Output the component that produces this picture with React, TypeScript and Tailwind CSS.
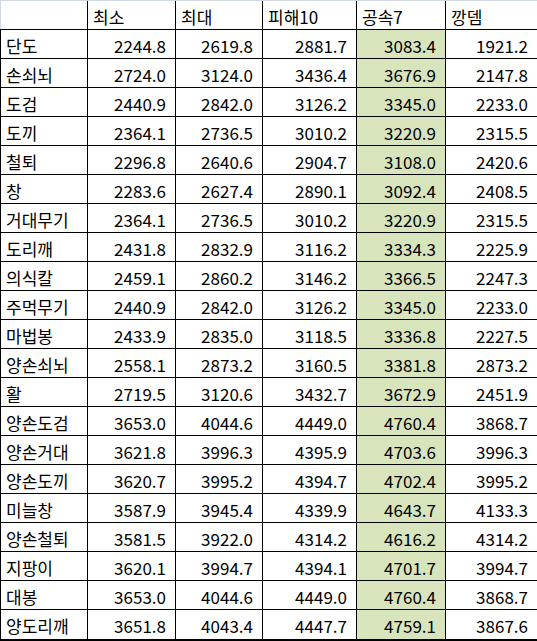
const headers = ["", "최소", "최대", "피해10", "공속7", "깡뎀"];

const rows: [string, string, string, string, string, string][] = [
  ["단도", "2244.8", "2619.8", "2881.7", "3083.4", "1921.2"],
  ["손쇠뇌", "2724.0", "3124.0", "3436.4", "3676.9", "2147.8"],
  ["도검", "2440.9", "2842.0", "3126.2", "3345.0", "2233.0"],
  ["도끼", "2364.1", "2736.5", "3010.2", "3220.9", "2315.5"],
  ["철퇴", "2296.8", "2640.6", "2904.7", "3108.0", "2420.6"],
  ["창", "2283.6", "2627.4", "2890.1", "3092.4", "2408.5"],
  ["거대무기", "2364.1", "2736.5", "3010.2", "3220.9", "2315.5"],
  ["도리깨", "2431.8", "2832.9", "3116.2", "3334.3", "2225.9"],
  ["의식칼", "2459.1", "2860.2", "3146.2", "3366.5", "2247.3"],
  ["주먹무기", "2440.9", "2842.0", "3126.2", "3345.0", "2233.0"],
  ["마법봉", "2433.9", "2835.0", "3118.5", "3336.8", "2227.5"],
  ["양손쇠뇌", "2558.1", "2873.2", "3160.5", "3381.8", "2873.2"],
  ["활", "2719.5", "3120.6", "3432.7", "3672.9", "2451.9"],
  ["양손도검", "3653.0", "4044.6", "4449.0", "4760.4", "3868.7"],
  ["양손거대", "3621.8", "3996.3", "4395.9", "4703.6", "3996.3"],
  ["양손도끼", "3620.7", "3995.2", "4394.7", "4702.4", "3995.2"],
  ["미늘창", "3587.9", "3945.4", "4339.9", "4643.7", "4133.3"],
  ["양손철퇴", "3581.5", "3922.0", "4314.2", "4616.2", "4314.2"],
  ["지팡이", "3620.1", "3994.7", "4394.1", "4701.7", "3994.7"],
  ["대봉", "3653.0", "4044.6", "4449.0", "4760.4", "3868.7"],
  ["양도리깨", "3651.8", "4043.4", "4447.7", "4759.1", "3867.6"],
];

const grid = "grid grid-cols-[88px_88px_87px_94px_89px_1fr]";

export default function App() {
  return (
    <div className="w-[537px] h-[641px] overflow-hidden bg-white text-black text-[17px] leading-none font-['Noto_Sans_CJK_KR','Noto_Sans',sans-serif]">
      {/* header */}
      <div className={`${grid} h-[30px] border-t border-[#d0d7e5] border-b border-b-black`}>
        {headers.map((h, i) => (
          <div
            key={i}
            className={`flex items-center pt-[2px] pl-[5px] border-r border-black ${
              i === 0 ? "border-l border-l-[#d0d7e5]" : ""
            } ${i === 5 ? "border-r-0" : ""}`}
          >
            {h}
          </div>
        ))}
      </div>
      {rows.map((r, ri) => {
        const last = ri === rows.length - 1;
        return (
          <div
            key={r[0]}
            className={`${grid} ${last ? "h-[31px] border-b-2" : "h-[29px] border-b"} border-black`}
          >
            {r.map((c, ci) => (
              <div
                key={ci}
                className={`flex items-center pt-[2px] ${
                  ci === 0 ? "pl-[5px] border-l border-r" : "justify-end pr-[9px] border-r"
                } ${ci === 4 ? "bg-[#d8e4bc]" : ""} ${ci === 5 ? "border-r-0" : ""} border-black`}
              >
                {c}
              </div>
            ))}
          </div>
        );
      })}
    </div>
  );
}
